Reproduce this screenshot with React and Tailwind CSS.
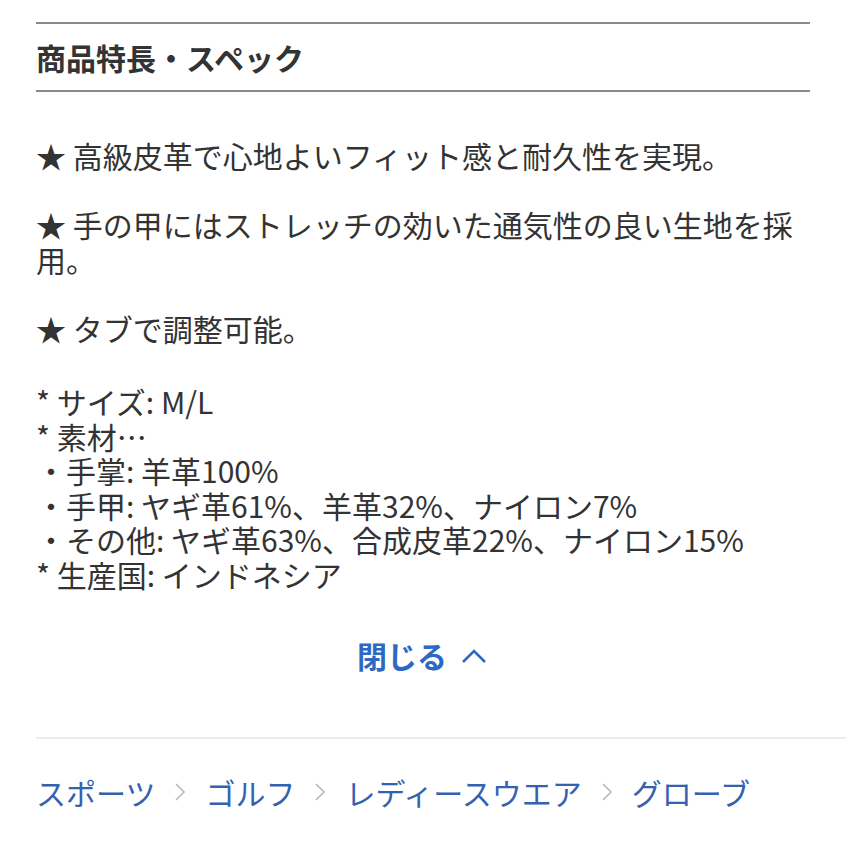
const font = { fontFamily: '"Noto Sans CJK JP", "Noto Sans", sans-serif' }

const Crumb = ({ children }) => (
  <span className="text-[#3462b0]">{children}</span>
)

const Sep = () => (
  <svg width="50" height="30" viewBox="0 0 50 30">
    <path d="M21 7 L29 15 L21 23" fill="none" stroke="#b8b8b8" strokeWidth="1.6" />
  </svg>
)

export default function App() {
  return (
    <div className="w-[846px] h-[846px] bg-white overflow-hidden" style={font}>
      <div className="pt-[22px]">
        <div className="mx-[36px] border-t-[2px] border-[#8a8a8a]" />
        <h2 className="mx-[36px] h-[66px] flex items-center text-[30px] font-bold text-[#333]">
          商品特長・スペック
        </h2>
        <div className="mx-[36px] border-t-[2px] border-[#8a8a8a]" />

        <div className="mx-[36px] mt-[46px] text-[30px] leading-[34.5px] text-[#333]">
          <p>★ 高級皮革で心地よいフィット感と耐久性を実現。</p>
          <p className="mt-[34.5px]">★ 手の甲にはストレッチの効いた通気性の良い生地を採用。</p>
          <p className="mt-[34.5px]">★ タブで調整可能。</p>
          <div className="mt-[39px]">
            <p>* サイズ: M/L</p>
            <p>* 素材…</p>
            <p>・手掌: 羊革100%</p>
            <p>・手甲: ヤギ革61%、羊革32%、ナイロン7%</p>
            <p>・その他: ヤギ革63%、合成皮革22%、ナイロン15%</p>
            <p>* 生産国: インドネシア</p>
          </div>
        </div>

        <div className="mt-[42px] flex justify-center items-center text-[30px] font-bold text-[#2d68c4]">
          <span>閉じる</span>
          <svg width="30" height="30" viewBox="0 0 30 30" className="ml-[12px]">
            <path d="M4 21 L15 10 L26 21" fill="none" stroke="#2d68c4" strokeWidth="2.6" />
          </svg>
        </div>

        <div className="ml-[36px] mt-[59px] border-t-[2px] border-[#ececec]" />

        <div className="mx-[36px] mt-[33px] flex items-center text-[30px] leading-[40px]">
          <Crumb>スポーツ</Crumb>
          <Sep />
          <Crumb>ゴルフ</Crumb>
          <Sep />
          <Crumb>レディースウエア</Crumb>
          <Sep />
          <Crumb>グローブ</Crumb>
        </div>
      </div>
    </div>
  )
}
